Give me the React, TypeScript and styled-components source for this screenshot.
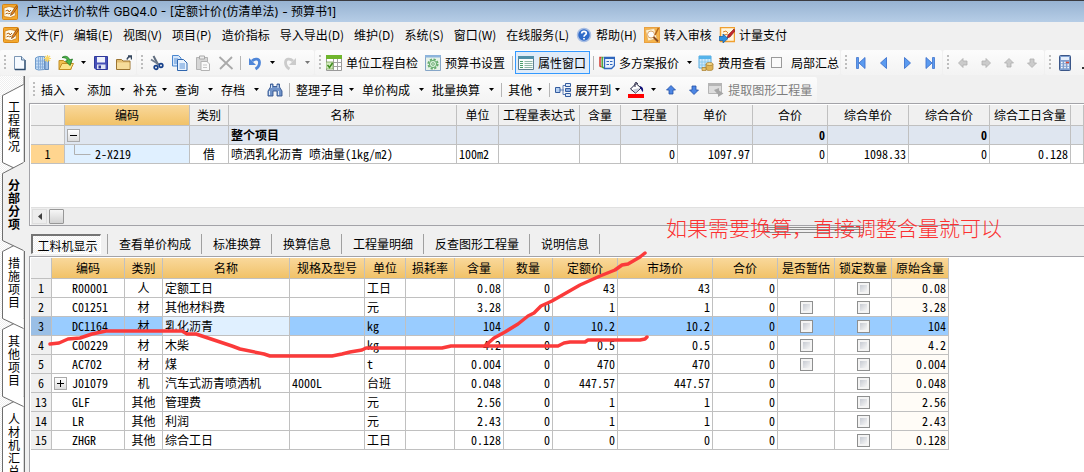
import React from 'react';
import styled, { createGlobalStyle, css } from 'styled-components';

const GlobalStyle = createGlobalStyle`
  *, *::before, *::after { box-sizing: border-box; }
  body {
    margin: 0;
    background: #f0f0f0;
    color: #000;
    font: 12px/16px "Noto Sans CJK SC", "Noto Sans", sans-serif;
  }
  button { font: inherit; color: inherit; background: none; border: 0; padding: 0; margin: 0; white-space: nowrap; }
  svg { display: block; flex: none; }
`;

/* ---------- window frame ---------- */

const Window = styled.div`
  position: relative;
  display: flex;
  flex-direction: column;
  height: 100vh;
  overflow: hidden;
`;

const TitleBar = styled.header`
  flex: none;
  display: flex;
  align-items: center;
  gap: 8px;
  height: 22px;
  padding-left: 2px;
  border-top: 1px solid #3b3b40;
  background: linear-gradient(#97b3d2, #b6cde6);
`;

const Title = styled.h1`
  margin: 0;
  font-family: Inter, "Noto Sans CJK SC", sans-serif;
  font-size: 12px;
  font-weight: 400;
  line-height: 16px;
  white-space: pre;
`;

const MenuBar = styled.nav`
  flex: none;
  display: flex;
  align-items: center;
  gap: 10px;
  height: 28px;
  padding: 0 0 2px 3px;
`;

const MenuItem = styled.button<{ $icon?: boolean }>`
  display: flex;
  align-items: center;
  gap: 4px;
  margin-left: ${(p) => (p.$icon ? '-3px' : '0')};
`;

const MenuIcon = styled.span`
  margin-right: -4px;
`;

/* ---------- toolbars ---------- */

const ToolRow = styled.div<{ $inner?: boolean }>`
  flex: none;
  display: flex;
  gap: 1px;
  height: 26px;
  margin: ${(p) => (p.$inner ? '1px 0 0 4px' : '0')};
  overflow: hidden;
`;

const ToolGroup = styled.div`
  flex: none;
  display: flex;
  align-items: center;
  height: 25px;
  padding-right: 1px;
  border-radius: 2px;
  background: linear-gradient(#fcfcfc, #f3f3f3);
`;

const Grip = styled.span`
  width: 2px;
  height: 15px;
  margin: 0 2px 0 4px;
  background: repeating-linear-gradient(#bdbdbd 0 2px, transparent 2px 4px);
`;

const ToolButton = styled.button<{ $checked?: boolean; $muted?: boolean }>`
  flex: none;
  display: flex;
  align-items: center;
  gap: 4px;
  height: 23px;
  padding: 0 4px 0 3px;
  color: ${(p) => (p.$muted ? '#7d7d7d' : '#000')};
  ${(p) => p.$checked && css`
    background: #e0ecf9;
    box-shadow: inset 0 0 0 1px #3399ff;
  `}
`;

const IconButton = styled.button`
  flex: none;
  display: flex;
  align-items: center;
  justify-content: center;
  width: 23px;
  height: 23px;
`;

const ArrowButton = styled(IconButton)`
  width: 12px;
`;

const DropButton = styled.button<{ $tight?: boolean }>`
  flex: none;
  display: flex;
  align-items: center;
  gap: ${(p) => (p.$tight ? '5px' : '9px')};
  height: 23px;
  padding: 0 4px;
`;

const ToolSeparator = styled.span`
  width: 1px;
  height: 14px;
  margin: 0 2px 0 3px;
  background: #b5b5b5;
`;

const ToolCheck = styled.label`
  display: flex;
  align-items: center;
  gap: 9px;
  padding-left: 1px;
`;

const FlatCheckbox = styled.input`
  appearance: none;
  width: 11px;
  height: 11px;
  margin: 0;
  border: 1px solid #9a9a9a;
  background: #fafafa;
`;

/* ---------- body ---------- */

const Body = styled.div`
  flex: 1;
  display: flex;
  min-height: 0;
`;

const SideBar = styled.nav`
  flex: none;
  width: 25px;
  padding-top: 13px;
  border-right: 1px solid #6d6d6d;
  background: repeating-conic-gradient(#ffffff 0 25%, #efefef 0 50%) 0 0 / 2px 2px;
  box-shadow: inset -1px 0 0 #b5b5b5;
`;

const SideTab = styled.button<{ $active?: boolean; $order: number }>`
  position: relative;
  z-index: ${(p) => (p.$active ? 10 : 9 - p.$order)};
  display: flex;
  justify-content: center;
  align-items: flex-start;
  width: 25px;
  min-height: 78px;
  padding: 11px 0 15px 3px;
  font-weight: ${(p) => (p.$active ? 700 : 400)};
`;

const SideTabShape = styled.svg`
  position: absolute;
  left: 0;
  top: -6px;
  z-index: -1;
`;

const SideTabText = styled.span`
  width: 12px;
  line-height: 13px;
  white-space: normal;
  word-break: break-all;
`;

const Main = styled.main`
  flex: 1;
  display: flex;
  flex-direction: column;
  min-width: 0;
`;

const Panel = styled.section<{ $fill?: boolean }>`
  flex: ${(p) => (p.$fill ? '1' : 'none')};
  margin-left: 4px;
  padding: 1px 0 0 1px;
  border: solid #a3a3a8;
  border-width: ${(p) => (p.$fill ? '1px 0 0 1px' : '1px 0 1px 1px')};
  background: #fff;
  overflow: hidden;
`;

const Grid = styled.table<{ $full?: boolean }>`
  width: ${(p) => (p.$full ? '100%' : '918px')};
  table-layout: fixed;
  border-collapse: separate;
  border-spacing: 0;
  font-feature-settings: "hwid";
  white-space: nowrap;
`;

const HeadCell = styled.th<{ $warm?: boolean }>`
  height: 21px;
  padding: 0;
  border: solid #c0c0c0;
  border-width: 0 1px 1px 0;
  font-weight: 400;
  line-height: 16px;
  background: ${(p) => (p.$warm ? 'linear-gradient(#f9d89b, #f1c268)' : '#f0f0f0')};
`;

type Align = 'left' | 'center' | 'right';

const Cell = styled.td<{ $align?: Align; $bg?: string; $bold?: boolean }>`
  height: 19px;
  padding: 0 2px;
  border: solid #c0c0c0;
  border-width: 0 1px 1px 0;
  line-height: 16px;
  overflow: hidden;
  text-align: ${(p) => p.$align || 'left'};
  background: ${(p) => p.$bg || '#fff'};
  font-weight: ${(p) => (p.$bold ? 700 : 400)};
`;

const RowNumber = styled(HeadCell)<{ $bg?: string }>`
  height: 19px;
  background: ${(p) => p.$bg || '#f0f0f0'};
`;

const TreeCell = styled.div`
  display: flex;
  align-items: center;
`;

const TreeSlot = styled.span<{ $wide?: boolean }>`
  flex: none;
  display: flex;
  width: ${(p) => (p.$wide ? '28px' : '18px')};
`;

const Expander = styled.button`
  display: flex;
  align-items: center;
  justify-content: center;
  width: 13px;
  height: 13px;
  border: 1px solid #a9a9a9;
  background: linear-gradient(#ffffff, #dcdcdc);
`;

const GridCheckbox = styled.input`
  appearance: none;
  display: block;
  width: 13px;
  height: 13px;
  margin: 0 auto;
  border: 1px solid #8e8f8f;
  background: linear-gradient(135deg, #c6cad2, #f6f6f6) content-box, #f4f4f4;
  padding: 2px;
`;

const ScrollArea = styled.div`
  height: 43px;
`;

const ScrollBar = styled.div`
  display: flex;
  align-items: center;
  gap: 2px;
  height: 18px;
  padding: 0 1px;
  border-top: 1px solid #e0e0e0;
  background: #ededed;
`;

const ScrollArrow = styled.button`
  display: flex;
  align-items: center;
  justify-content: center;
  width: 15px;
  height: 15px;
  border: 1px solid #dedede;
`;

const ScrollThumb = styled.button`
  width: 15px;
  height: 15px;
  border: 1px solid #979797;
  border-radius: 1px;
  background: linear-gradient(#f6f6f6, #d2d2d2);
`;

const Splitter = styled.div`
  flex: none;
  position: relative;
  height: 8px;
`;

const SplitHandle = styled.span`
  position: absolute;
  right: 220px;
  top: 1px;
  width: 100px;
  height: 6px;
  border: 1px solid #8c8c8c;
  background: linear-gradient(#f0f0f0 1px, #8c8c8c 1px 2px, #f0f0f0 2px);
`;

const TabBar = styled.div`
  flex: none;
  display: flex;
  align-items: center;
  height: 22px;
  padding: 0 0 2px 6px;
`;

const ActiveTab = styled.button`
  width: 70px;
  height: 20px;
  padding: 1px 0 0 2px;
  border: solid;
  border-width: 2px 1px 1px 2px;
  border-color: #747474 #fff #fff #747474;
  background: repeating-conic-gradient(#ffffff 0 25%, #f0f0f0 0 50%) 0 0 / 2px 2px;
  line-height: 15px;
`;

const TabDivider = styled.span`
  width: 1px;
  height: 20px;
  margin-left: 6px;
  background: #a0a0a0;
`;

const Tab = styled.button`
  height: 20px;
  padding: 0 10px 0 11px;
  border-right: 1px solid #a0a0a0;
`;

/* ---------- annotation laid over the window ---------- */

const Strokes = styled.svg`
  position: absolute;
  left: 0;
  top: 0;
  pointer-events: none;
  z-index: 20;
`;

const Note = styled.p`
  position: absolute;
  left: 666px;
  top: 213px;
  z-index: 21;
  margin: 0;
  color: #fb3232;
  font-size: 21px;
  font-weight: 300;
  line-height: 28px;
  white-space: nowrap;
`;

/* ---------- icons ---------- */

const Svg = ({ children, w = 16, h = 16 }: { children: React.ReactNode; w?: number; h?: number }) => (
  <svg width={w} height={h} viewBox={`0 0 ${w} ${h}`} aria-hidden="true">{children}</svg>
);

const Caret = ({ muted }: { muted?: boolean }) => (
  <Svg w={5} h={3}><path d="M0 0h5L2.5 3z" fill={muted ? '#777' : '#000'} /></Svg>
);

const AppIcon = () => (
  <Svg>
    <rect x=".5" y=".5" width="15" height="15" rx="1" fill="#f3a82c" stroke="#d98613" />
    <path d="M2 4l5-1.500 5 1 1.500 8-5 2-6.500-1z" fill="#fffbe8" stroke="#c9771a" strokeWidth=".7" />
    <path d="M3.500 7l2.500-1 1 2 2-2M3.500 10l2-1 1 1 2-1" stroke="#b5651a" fill="none" />
    <path d="M14.500 1.500L9.500 8.500l-1 3 2.500-1.500 4.500-7z" fill="#e98a1d" stroke="#7d3d0c" strokeWidth=".7" />
  </Svg>
);

const HelpIcon = () => (
  <Svg>
    <circle cx="8" cy="8" r="6.500" fill="#2f6bc9" stroke="#a9bfe4" strokeWidth="1.500" />
    <path d="M5.700 6.400C5.700 3.600 10.300 3.700 10.300 6.300 10.300 7.900 8 7.900 8 9.700M8 11v1.600" fill="none" stroke="#fff" strokeWidth="1.700" />
  </Svg>
);

const AuditIcon = () => (
  <Svg>
    <rect x=".5" y=".5" width="15" height="15" fill="#f6b54a" stroke="#e9a040" />
    <path d="M1.500 3l9-1.500 2.500 10-9 2.500z" fill="#fff3d4" stroke="#e2a75a" strokeWidth=".7" />
    <circle cx="7" cy="7.500" r="3.500" fill="#fdfdfd" stroke="#d9a46a" />
    <path d="M9.500 10l4.500 4.500" stroke="#8a4b20" strokeWidth="2" />
    <path d="M14.500 1L11 8" stroke="#b5651a" strokeWidth="1.500" />
  </Svg>
);

const PayIcon = () => (
  <Svg>
    <rect x="1.500" y=".5" width="14" height="14" fill="#fff6df" stroke="#f0a030" strokeWidth="1.500" />
    <path d="M4 5l3-1 2 2M5 8l4-1" stroke="#d9822b" fill="none" />
    <path d="M15 2L9 8l-1 3 3-1 5-6z" fill="#c2272d" stroke="#7e1518" strokeWidth=".6" />
    <path d="M0 9.500h4V7l5 4.500L4 16v-2.500H0z" fill="#2d8fe0" stroke="#16589c" strokeWidth=".7" />
  </Svg>
);

const NewIcon = () => (
  <Svg>
    <path d="M2.500 1.500h7l3.500 3.500v9.500H2.500z" fill="#f6faff" stroke="#7d97b5" />
    <path d="M13 5v9.500H3" fill="none" stroke="#2c4a6b" strokeWidth="1.300" />
    <path d="M9.500 1.500V5H13" fill="#cfe0f2" stroke="#5f7d9e" />
  </Svg>
);

const BookIcon = () => (
  <Svg>
    <path d="M.5 3l3-1.500h6v13l-6 .5-3-1z" fill="#c3dcf5" stroke="#6f9bcb" />
    <path d="M3.500 2v12.500M5.500 2v12M7.500 2v12M1 6h12M1 9h12M1 12h12" stroke="#7ba5d6" strokeWidth=".8" />
    <path d="M10 5h3.500v9.500H10z" fill="#9fc0e6" stroke="#5580b5" strokeWidth=".9" />
    <path d="M12.500 0v7M9 3.500h7M10 1l5 5M15 1l-5 5" stroke="#f8d667" strokeWidth="1.200" />
  </Svg>
);

const OpenIcon = () => (
  <Svg>
    <path d="M1 14.500V5.500h4.500l1.500 1.500h6v7.500z" fill="#f0c04e" stroke="#c28e24" />
    <path d="M1 14.500l3-6h11.500l-3 6z" fill="#fbe488" stroke="#c28e24" />
    <path d="M4 2.500C7 0 11 1.500 11.500 5l3-1-2.500 6.500L7.500 6l2-.5C9 3.500 7 2.500 4 2.500z" fill="#4cb84a" stroke="#1d7420" strokeWidth=".8" />
  </Svg>
);

const SaveIcon = () => (
  <Svg>
    <path d="M1.500 1.500h13v13H3l-1.500-1.500z" fill="#4650b8" stroke="#2f389a" />
    <path d="M4 2h8v5.500H4z" fill="#eef1fa" />
    <path d="M4 9.500h8.500V14H4z" fill="#dfe4f3" />
    <path d="M5.500 10.500h2.500v3H5.500z" fill="#2f389a" />
  </Svg>
);

const FolderIcon = () => (
  <Svg>
    <path d="M.5 14.500v-10h5l1.500 1.500h7v8.500z" fill="#e3bd70" stroke="#9b7431" />
    <path d="M1 14V7.500h12.500V14z" fill="#f6dc9a" />
    <path d="M12 1h3.500v3.500M15 1.500c-2 0-3.500 1-4 3" fill="none" stroke="#34465e" strokeWidth="1.400" />
  </Svg>
);

const CutIcon = () => (
  <Svg>
    <path d="M4.500 1l4.500 8.500" stroke="#5d6a7c" strokeWidth="2" />
    <path d="M2 4.500l8 5" stroke="#6f7c8e" strokeWidth="1.800" />
    <circle cx="7" cy="12.500" r="1.800" fill="none" stroke="#143f8a" strokeWidth="1.700" />
    <circle cx="12" cy="10.500" r="1.800" fill="none" stroke="#143f8a" strokeWidth="1.700" />
  </Svg>
);

const CopyIcon = () => (
  <Svg>
    <path d="M.5 .5h6l2.500 2.500v8H.5z" fill="#d5e6fa" stroke="#4b87cf" />
    <path d="M5.500 4.500h6l3.500 3.500v7.500H5.500z" fill="#eaf3fe" stroke="#2f66ae" />
    <path d="M7.500 9h5.500M7.500 11h5.500M7.500 13h5.500M2 4h4M2 6h3M2 8h3" stroke="#5b92d6" />
  </Svg>
);

const PasteIcon = () => (
  <Svg>
    <path d="M1.500 2.500h11v12h-11z" fill="#d6d6d6" stroke="#b3b3b3" />
    <path d="M4.500 1h5v3h-5z" fill="#ededed" stroke="#a9a9a9" />
    <path d="M6 6.500h6l2.500 2.500v6.500H6z" fill="#fafafa" stroke="#b3b3b3" />
    <path d="M8 10h4M8 12.500h4" stroke="#c5c5c5" />
  </Svg>
);

const DeleteIcon = () => (
  <Svg><path d="M1.500 2l13 12M14 2L2 14" stroke="#a9a9a9" strokeWidth="1.800" /></Svg>
);

const UndoIcon = ({ muted, flip }: { muted?: boolean; flip?: boolean }) => (
  <Svg>
    <g transform={flip ? 'translate(16 0) scale(-1 1)' : undefined}>
      <path d="M5 6C8 3 12.500 3.500 12.500 7.500c0 3-1.500 5-4 6.500" fill="none" stroke={muted ? '#cbcbcb' : '#4f86d8'} strokeWidth="2.800" />
      <path d="M2 3v7h7z" fill={muted ? '#cbcbcb' : '#4f86d8'} />
    </g>
  </Svg>
);

const SheetCheckIcon = () => (
  <Svg>
    <path d="M.5.5h15v15H.5z" fill="#fff" stroke="#9a9a9a" />
    <path d="M0 0h16v4H0z" fill="#6fb52c" />
    <path d="M1 7.500h14M1 11.500h14M7.500 4v11M11.500 4v11" stroke="#a3a3a3" />
    <path d="M0 7h7v7H0z" fill="#d5ebc1" stroke="#79a556" strokeWidth=".8" />
    <path d="M1.500 10l2 2.500L6.500 8" fill="none" stroke="#3c8b1c" strokeWidth="1.500" />
  </Svg>
);

const GearIcon = () => (
  <Svg>
    <path d="M.5.5h15v15H.5z" fill="#e7f2e9" stroke="#86a6c8" />
    <path d="M0 0h16v2.500H0z" fill="#8db4dc" />
    <circle cx="8" cy="9" r="4.600" fill="none" stroke="#66ac6d" strokeWidth="2" strokeDasharray="2.200 1.400" />
    <circle cx="8" cy="9" r="3.600" fill="#d9efdb" stroke="#66ac6d" />
    <circle cx="8" cy="9" r="1.300" fill="#fff" stroke="#66ac6d" />
  </Svg>
);

const PropsIcon = () => (
  <Svg>
    <path d="M.5 1.500h15v13H.5z" fill="#f9fdfc" stroke="#5d7f91" />
    <path d="M0 1h16v3H0z" fill="#4f8fa8" />
    <path d="M2 6.500h3M2 8.500h3M2 10.500h3M2 12.500h3" stroke="#4a9d6a" />
    <path d="M6.500 6.500h8M6.500 8.500h8M6.500 10.500h8M6.500 12.500h8" stroke="#8fb7a7" />
  </Svg>
);

const PlansIcon = () => (
  <Svg>
    <path d="M2.500 2.500H1V11l1.500 1" fill="none" stroke="#d33a2f" strokeWidth="1.500" />
    <path d="M4.500 2.500H3.200V12l1.800 1" fill="none" stroke="#4aa33a" strokeWidth="1.500" />
    <path d="M5.500 2.500h10v8l-3 3h-7z" fill="#e9f2fd" stroke="#2f66bd" strokeWidth="1.300" />
    <path d="M5.500 3.500h10M7.500 6.500h2.500M11 6.500h2.500M7.500 9.500h2.500M11 9.500h2.500" stroke="#2f66bd" />
  </Svg>
);

const CostIcon = () => (
  <Svg>
    <path d="M1 1h12v12H1z" fill="#cfe9fb" stroke="#55a9dd" />
    <path d="M1 1h12v3H1z" fill="#55b3ea" />
    <path d="M4 4v9M7 4v9M10 4v9M1 7h12M1 10h12" stroke="#82c4ec" strokeWidth=".8" />
    <path d="M8 9v5c0 2 7 2 7 0V9c0 2-7 2-7 0z" fill="#dfb455" stroke="#a87d2b" strokeWidth=".7" />
    <ellipse cx="11.500" cy="9" rx="3.500" ry="1.500" fill="#f4d98c" stroke="#a87d2b" strokeWidth=".7" />
    <path d="M4 12.500h4v3H4z" fill="#e8c471" stroke="#a87d2b" strokeWidth=".7" />
  </Svg>
);

const NavIcon = ({ back, end }: { back?: boolean; end?: boolean }) => (
  <Svg>
    <g transform={back ? 'translate(16 0) scale(-1 1)' : undefined}>
      <path d={end ? 'M4 2.500l6 5.500-6 5.500z' : 'M5.500 2.500l6 5.500-6 5.500z'} fill="#5b9bf0" stroke="#3f73cd" strokeWidth=".9" />
      {end && <path d="M10.500 2.500h2v11h-2z" fill="#5b9bf0" stroke="#3f73cd" strokeWidth=".8" />}
    </g>
  </Svg>
);

const ArrowIcon = ({ angle, blue }: { angle: number; blue?: boolean }) => (
  <Svg>
    <path
      transform={`rotate(${angle} 8 8)`}
      d="M8 3.500l4.500 4.500h-2.500v4h-4V8H3.500z"
      fill={blue ? '#4c86e4' : '#cbcbcb'}
      stroke={blue ? '#2350a6' : '#aeaeae'}
      strokeWidth=".8"
    />
  </Svg>
);

const CalcIcon = () => (
  <Svg>
    <rect x="2.500" y=".5" width="11" height="15" rx="1" fill="#7f9fd0" stroke="#3b5688" />
    <path d="M4 2h8v3H4z" fill="#e5eefb" />
    <path d="M4 7.500h8M4 10h8M4 12.500h8" stroke="#fff" strokeWidth="1.500" strokeDasharray="1.600 1.600" />
    <path d="M8.800 7.500h3.200" stroke="#d94a3a" strokeWidth="1.500" />
  </Svg>
);

const BinocularsIcon = () => (
  <Svg>
    <path d="M3.500 2h2.500v2.500h4V2h2.500v3l2.500 4v5h-5V9H6v5H1V9l2.500-4z" fill="#6f92c8" stroke="#34568f" strokeWidth=".9" />
    <path d="M2.500 9v4M11.500 9v4M4.500 3v3M11 3v3" stroke="#dbe7f8" />
  </Svg>
);

const ExpandIcon = () => (
  <Svg>
    <path d="M5 8h4M8 3.500h3M8 12.500h3M8 3.500v9" stroke="#5d7db5" fill="none" />
    <path d="M.5 5.500h4.500v5H.5z" fill="#b6d0f2" stroke="#345c9f" />
    <path d="M10.500 1.500h5v3h-5zM10.500 11.500h5v3h-5z" fill="#dce9fa" stroke="#345c9f" />
    <path d="M10.500 6.500h5v3h-5z" fill="#8fb2e3" stroke="#345c9f" />
  </Svg>
);

const FillIcon = () => (
  <Svg>
    <path d="M0 12h16v4H0z" fill="#f00" />
    <path d="M2.500 7L8 1.500 13 6l-5.500 5z" fill="#fff" stroke="#1c1c3c" />
    <path d="M5 7.500L12 6 8 10.500z" fill="#c7cbd8" />
    <path d="M7 5V1.500C7 0 9.500 0 9.500 2" fill="none" stroke="#1c1c3c" />
    <path d="M12 4c3 1 3.500 3 3 6-1.500-.5-1.500-3-3-4z" fill="#10107a" />
  </Svg>
);

const ExtractIcon = () => (
  <Svg>
    <path d="M.5 1.500h13v10H.5z" fill="#dcdcdc" stroke="#b5b5b5" />
    <path d="M0 1h14v3H0z" fill="#b5b5b5" />
    <path d="M6 8l5-2v2.500l4.500 3L10 15v-2.500z" fill="#a6a6a6" />
  </Svg>
);

const TreeBranch = () => (
  <Svg w={28} h={18}><path d="M7.500 0v9.500h16" fill="none" stroke="#b0b0b0" /></Svg>
);

/* ---------- data ---------- */

const menus = ['文件(F)', '编辑(E)', '视图(V)', '项目(P)', '造价指标', '导入导出(D)', '维护(D)', '系统(S)', '窗口(W)', '在线服务(L)'];

const sideTabs = ['工程概况', '分部分项', '措施项目', '其他项目', '人材机汇总'];

const itemColumns: [string, number?][] = [
  ['', 34], ['编码', 125], ['类别', 39], ['名称', 228], ['单位', 42], ['工程量表达式', 81], ['含量', 41],
  ['工程量', 57], ['单价', 75], ['合价', 75], ['综合单价', 81], ['综合合价', 81], ['综合工日含量', 81], [''],
];

const resourceColumns: [string, number][] = [
  ['', 21], ['编码', 73], ['类别', 38], ['名称', 127], ['规格及型号', 75], ['单位', 41], ['损耗率', 49], ['含量', 49],
  ['数量', 49], ['定额价', 65], ['市场价', 95], ['合价', 65], ['是否暂估', 57], ['锁定数量', 57], ['原始含量', 57],
];

interface Resource {
  no: number; code: string; kind: string; name: string; unit: string; amount: string; price: string;
  spec?: string; estimate?: boolean; selected?: boolean; expandable?: boolean;
}

const resources: Resource[] = [
  { no: 1, code: 'R00001', kind: '人', name: '定额工日', unit: '工日', amount: '0.08', price: '43' },
  { no: 2, code: 'C01251', kind: '材', name: '其他材料费', unit: '元', amount: '3.28', price: '1', estimate: true },
  { no: 3, code: 'DC1164', kind: '材', name: '乳化沥青', unit: 'kg', amount: '104', price: '10.2', estimate: true, selected: true },
  { no: 4, code: 'C00229', kind: '材', name: '木柴', unit: 'kg', amount: '4.2', price: '0.5', estimate: true },
  { no: 5, code: 'AC702', kind: '材', name: '煤', unit: 't', amount: '0.004', price: '470', estimate: true },
  { no: 6, code: 'J01079', kind: '机', name: '汽车式沥青喷洒机', spec: '4000L', unit: '台班', amount: '0.048', price: '447.57', expandable: true },
  { no: 13, code: 'GLF', kind: '其他', name: '管理费', unit: '元', amount: '2.56', price: '1' },
  { no: 14, code: 'LR', kind: '其他', name: '利润', unit: '元', amount: '2.43', price: '1' },
  { no: 15, code: 'ZHGR', kind: '其他', name: '综合工日', unit: '工日', amount: '0.128', price: '0' },
];

const detailTabs = ['查看单价构成', '标准换算', '换算信息', '工程量明细', '反查图形工程量', '说明信息'];

const underline =
  'M50 344l9-1 9-4 12-1 12-4 14-3h76l5 3h9l9 3 27 9 8 3 24 5 6 2h62l10-2 8-2 12-2 4-2h76l9-2h107l6-3 6-1h15l3-2h52l5-1 2-2';
const pointer =
  'M486 345l8-7 11-6 13-8 10-8 6-3 7-7 11-5 28-16 20-9 15-6 7-5 6-1 12-7 5-4';

/* ---------- parts ---------- */

const Tool = ({ icon, label }: { icon: React.ReactNode; label: string }) => (
  <IconButton type="button" aria-label={label}>{icon}</IconButton>
);

const Drop = ({ children, tight }: { children: React.ReactNode; tight?: boolean }) => (
  <DropButton type="button" $tight={tight}>{children}<Caret /></DropButton>
);

const More = ({ label, muted }: { label: string; muted?: boolean }) => (
  <ArrowButton type="button" aria-label={label}><Caret muted={muted} /></ArrowButton>
);

const SideTabOutline = ({ height, active }: { height: number; active?: boolean }) => (
  <SideTabShape width="25" height={height + 13} viewBox={`0 0 25 ${height + 13}`} aria-hidden="true">
    {active && <path d={`M25 1v${height + 11}h-2v-${height + 11}z`} fill="#f0f0f0" />}
    <path
      d={`M23.5 1.5L2.5 12.5V${height + 1.5}L23.5 ${height + 11.5}`}
      fill={active ? '#f0f0f0' : '#fff'}
      stroke="#6d6d6d"
    />
  </SideTabShape>
);

const MainToolbar = () => (
  <ToolRow>
    <ToolGroup>
      <Grip />
      <Tool label="新建" icon={<NewIcon />} />
      <Tool label="新建项目" icon={<BookIcon />} />
      <Tool label="打开" icon={<OpenIcon />} />
      <More label="打开更多" />
      <Tool label="保存" icon={<SaveIcon />} />
      <Tool label="文件夹" icon={<FolderIcon />} />
    </ToolGroup>
    <ToolGroup>
      <Grip />
      <Tool label="剪切" icon={<CutIcon />} />
      <Tool label="复制" icon={<CopyIcon />} />
      <Tool label="粘贴" icon={<PasteIcon />} />
      <Tool label="删除" icon={<DeleteIcon />} />
      <ToolSeparator />
      <Tool label="撤销" icon={<UndoIcon />} />
      <More label="撤销更多" />
      <Tool label="恢复" icon={<UndoIcon muted flip />} />
      <More label="恢复更多" muted />
    </ToolGroup>
    <ToolGroup>
      <Grip />
      <ToolButton type="button"><SheetCheckIcon />单位工程自检</ToolButton>
      <ToolButton type="button"><GearIcon />预算书设置</ToolButton>
      <ToolSeparator />
      <ToolButton type="button" $checked><PropsIcon />属性窗口</ToolButton>
      <ToolSeparator />
      <ToolButton type="button"><PlansIcon />多方案报价</ToolButton>
      <More label="报价更多" />
      <ToolButton type="button"><CostIcon />费用查看</ToolButton>
      <ToolCheck><FlatCheckbox type="checkbox" />局部汇总</ToolCheck>
    </ToolGroup>
    <ToolGroup>
      <Grip />
      <Tool label="首条" icon={<NavIcon back end />} />
      <Tool label="上一条" icon={<NavIcon back />} />
      <Tool label="下一条" icon={<NavIcon />} />
      <Tool label="末条" icon={<NavIcon end />} />
    </ToolGroup>
    <ToolGroup>
      <Grip />
      <Tool label="左移" icon={<ArrowIcon angle={-90} />} />
      <Tool label="右移" icon={<ArrowIcon angle={90} />} />
      <Tool label="上移" icon={<ArrowIcon angle={0} />} />
      <Tool label="下移" icon={<ArrowIcon angle={180} />} />
    </ToolGroup>
    <ToolGroup>
      <Grip />
      <Tool label="计算器" icon={<CalcIcon />} />
      <Tool label="标尺" icon={<Svg><path d="M2 12h12v2H2z" fill="#333" /></Svg>} />
    </ToolGroup>
  </ToolRow>
);

const EditToolbar = () => (
  <ToolRow $inner>
    <ToolGroup>
      <Grip />
      <Drop>插入</Drop>
      <Drop>添加</Drop>
      <Drop tight>补充</Drop>
      <Drop>查询</Drop>
      <Drop>存档</Drop>
      <Tool label="查找" icon={<BinocularsIcon />} />
      <ToolSeparator />
      <Drop tight>整理子目</Drop>
      <Drop>单价构成</Drop>
      <Drop>批量换算</Drop>
      <ToolSeparator />
      <Drop tight>其他</Drop>
      <ToolSeparator />
      <ToolButton type="button"><ExpandIcon />展开到<Caret /></ToolButton>
      <Tool label="填充颜色" icon={<FillIcon />} />
      <More label="更多颜色" />
      <Tool label="向上" icon={<ArrowIcon angle={0} blue />} />
      <Tool label="向下" icon={<ArrowIcon angle={180} blue />} />
      <ToolButton type="button" $muted><ExtractIcon />提取图形工程量</ToolButton>
    </ToolGroup>
  </ToolRow>
);

const ItemGrid = () => {
  const group = '#dfe6f0';
  return (
    <Grid $full>
      <colgroup>{itemColumns.map(([, w], i) => <col key={i} width={w} />)}</colgroup>
      <thead>
        <tr>{itemColumns.map(([t], i) => <HeadCell key={i} $warm={i === 1}>{t}</HeadCell>)}</tr>
      </thead>
      <tbody>
        <tr>
          <RowNumber />
          <Cell $bg={group}>
            <TreeCell>
              <Expander type="button" aria-label="折叠"><Svg w={9} h={9}><path d="M1 4.500h7" stroke="#000" /></Svg></Expander>
            </TreeCell>
          </Cell>
          <Cell $bg={group} />
          <Cell $bg={group} $bold>整个项目</Cell>
          {['', '', '', '', '', '0', '', '0', '', ''].map((v, i) => (
            <Cell key={i} $bg={group} $align="right" $bold>{v}</Cell>
          ))}
        </tr>
        <tr>
          <RowNumber $bg="#ffd58f">1</RowNumber>
          <Cell $bg="#e0f0ff"><TreeCell><TreeSlot $wide><TreeBranch /></TreeSlot>2-X219</TreeCell></Cell>
          <Cell $align="center">借</Cell>
          <Cell>喷洒乳化沥青 喷油量(1kg/m2)</Cell>
          <Cell>100m2</Cell>
          {['', '', '0', '1097.97', '0', '1098.33', '0', '0.128', ''].map((v, i) => (
            <Cell key={i} $align="right">{v}</Cell>
          ))}
        </tr>
      </tbody>
    </Grid>
  );
};

const ResourceRow = ({ r }: { r: Resource }) => {
  const bg = r.selected ? '#99ccff' : undefined;
  return (
    <tr>
      <RowNumber $bg={r.selected ? '#9abfe6' : undefined}>{r.no}</RowNumber>
      <Cell $bg={bg}>
        <TreeCell>
          <TreeSlot>
            {r.expandable && (
              <Expander type="button" aria-label="展开">
                <Svg w={9} h={9}><path d="M1 4.500h7M4.500 1v7" stroke="#000" /></Svg>
              </Expander>
            )}
          </TreeSlot>
          {r.code}
        </TreeCell>
      </Cell>
      <Cell $bg={bg} $align="center">{r.kind}</Cell>
      <Cell $bg={r.selected ? '#e0f0ff' : undefined}>{r.name}</Cell>
      <Cell $bg={bg}>{r.spec}</Cell>
      <Cell $bg={bg}>{r.unit}</Cell>
      <Cell $bg={bg} />
      {[r.amount, '0', r.price, r.price, '0'].map((v, i) => (
        <Cell key={i} $bg={bg} $align="right">{v}</Cell>
      ))}
      <Cell $bg={bg}>{r.estimate && <GridCheckbox type="checkbox" aria-label={`${r.name} 是否暂估`} />}</Cell>
      <Cell $bg={bg}><GridCheckbox type="checkbox" aria-label={`${r.name} 锁定数量`} /></Cell>
      <Cell $bg={bg || '#fffcf7'} $align="right">{r.amount}</Cell>
    </tr>
  );
};

export default function App() {
  return (
    <Window>
      <GlobalStyle />
      <TitleBar>
        <AppIcon />
        <Title>广联达计价软件 GBQ4.0 - [定额计价(仿清单法) - 预算书1]</Title>
      </TitleBar>
      <MenuBar>
        <MenuIcon><AppIcon /></MenuIcon>
        {menus.map((m) => <MenuItem key={m} type="button">{m}</MenuItem>)}
        <MenuItem type="button" $icon><HelpIcon />帮助(H)</MenuItem>
        <MenuItem type="button" $icon><AuditIcon />转入审核</MenuItem>
        <MenuItem type="button" $icon><PayIcon />计量支付</MenuItem>
      </MenuBar>
      <MainToolbar />
      <Body>
        <SideBar>
          {sideTabs.map((t, i) => (
            <SideTab key={t} type="button" $active={i === 1} $order={i}>
              <SideTabOutline height={t.length > 4 ? 91 : 78} active={i === 1} />
              <SideTabText>{t}</SideTabText>
            </SideTab>
          ))}
        </SideBar>
        <Main>
          <EditToolbar />
          <Panel>
            <ItemGrid />
            <ScrollArea />
            <ScrollBar>
              <ScrollArrow type="button" aria-label="向左滚动">
                <Svg w={4} h={7}><path d="M4 0v7L0 3.500z" fill="#404040" /></Svg>
              </ScrollArrow>
              <ScrollThumb type="button" aria-label="滚动条" />
            </ScrollBar>
          </Panel>
          <Splitter><SplitHandle /></Splitter>
          <TabBar>
            <ActiveTab type="button">工料机显示</ActiveTab>
            <TabDivider />
            {detailTabs.map((t) => <Tab key={t} type="button">{t}</Tab>)}
          </TabBar>
          <Panel $fill>
            <Grid>
              <colgroup>{resourceColumns.map(([, w], i) => <col key={i} width={w} />)}</colgroup>
              <thead>
                <tr>{resourceColumns.map(([t], i) => <HeadCell key={i} $warm={i > 0}>{t}</HeadCell>)}</tr>
              </thead>
              <tbody>{resources.map((r) => <ResourceRow key={r.no} r={r} />)}</tbody>
            </Grid>
          </Panel>
        </Main>
      </Body>
      <Strokes width="700" height="400" viewBox="0 0 700 400" aria-hidden="true">
        <path d={`${underline}${pointer}`} fill="none" stroke="#fb3a3a" strokeWidth="3.500" strokeLinecap="round" strokeLinejoin="round" />
      </Strokes>
      <Note>如果需要换算，直接调整含量就可以</Note>
    </Window>
  );
}
